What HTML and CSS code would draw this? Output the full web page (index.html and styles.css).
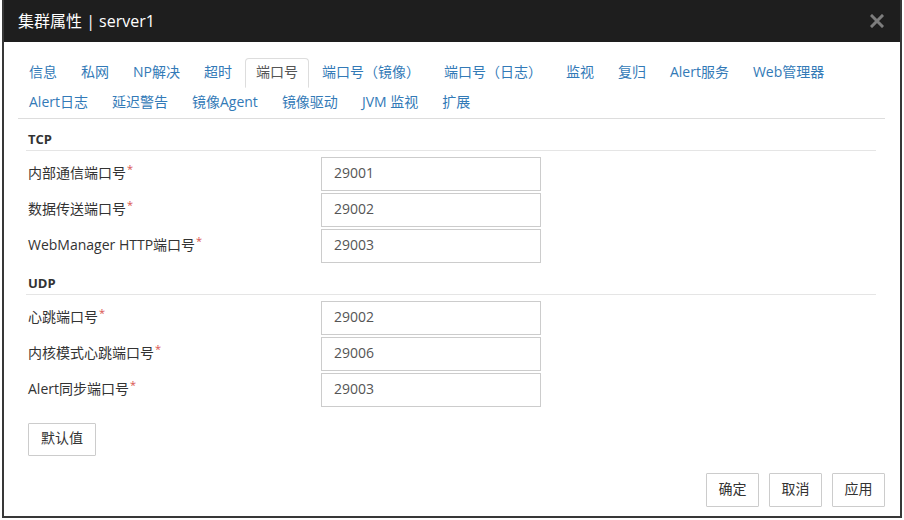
FILE: index.html
```html
<!DOCTYPE html>
<html lang="zh-CN">
<head>
<meta charset="utf-8">
<title>集群属性</title>
<link rel="stylesheet" href="styles.css">
</head>
<body>
<div class="dialog">
  <div class="header">
    <span class="title">集群属性 | server1</span>
    <span class="close" aria-label="close">
      <svg width="14" height="14" viewBox="0 0 14 14"><path d="M2 2 L12 12 M12 2 L2 12" stroke="#7d7d7d" stroke-width="3" stroke-linecap="square"/></svg>
    </span>
  </div>
  <div class="body">
    <ul class="tabs">
      <li><a>信息</a></li>
      <li><a>私网</a></li>
      <li><a>NP解决</a></li>
      <li><a>超时</a></li>
      <li><a class="active">端口号</a></li>
      <li><a>端口号（镜像）</a></li>
      <li><a>端口号（日志）</a></li>
      <li><a>监视</a></li>
      <li><a>复归</a></li>
      <li><a>Alert服务</a></li>
      <li><a>Web管理器</a></li>
      <li><a>Alert日志</a></li>
      <li><a>延迟警告</a></li>
      <li><a>镜像Agent</a></li>
      <li><a>镜像驱动</a></li>
      <li><a>JVM 监视</a></li>
      <li><a>扩展</a></li>
    </ul>
    <div class="form">
      <div class="section">TCP</div>
      <div class="row"><label>内部通信端口号<sup>*</sup></label><input class="field" value="29001"></div>
      <div class="row"><label>数据传送端口号<sup>*</sup></label><input class="field" value="29002"></div>
      <div class="row"><label>WebManager HTTP端口号<sup>*</sup></label><input class="field" value="29003"></div>
      <div class="section">UDP</div>
      <div class="row"><label>心跳端口号<sup>*</sup></label><input class="field" value="29002"></div>
      <div class="row"><label>内核模式心跳端口号<sup>*</sup></label><input class="field" value="29006"></div>
      <div class="row"><label>Alert同步端口号<sup>*</sup></label><input class="field" value="29003"></div>
      <button class="btn default">默认值</button>
    </div>
    <div class="footer">
      <button class="btn">确定</button>
      <button class="btn">取消</button>
      <button class="btn">应用</button>
    </div>
  </div>
</div>
</body>
</html>
```
FILE: styles.css
```css
* { box-sizing: border-box; }
html, body { margin: 0; padding: 0; background: #fff; }
body {
  font-family: "Open Sans", "Noto Sans CJK SC", sans-serif;
  font-size: 14px;
  color: #333;
}
.dialog {
  margin-left: 2px;
  width: 900px;
  height: 518px;
  border: 2px solid #383838;
  border-top: none;
  background: #fff;
}
.header {
  height: 42px;
  background: #1e1e1e;
  display: flex;
  align-items: center;
  justify-content: space-between;
  padding: 0 16px 0 14px;
}
.title {
  color: #fff;
  font-size: 16px;
  line-height: 42px;
}
.close { display: flex; align-items: center; }
.body {
  padding: 16px 15px 0 14px;
}
.tabs {
  list-style: none;
  margin: 0;
  padding: 0;
  display: flex;
  flex-wrap: wrap;
  border-bottom: 1px solid #ddd;
}
.tabs li { display: block; }
.tabs a {
  display: block;
  padding: 3px 10px 5px;
  line-height: 20px;
  margin-right: 2px;
  border: 1px solid transparent;
  border-radius: 4px 4px 0 0;
  color: #337ab7;
  white-space: nowrap;
}
.tabs a.active {
  color: #555;
  border-color: #ddd;
  border-bottom-color: transparent;
  background: #fff;
}
.form {
  margin: 0 9px 0 8px;
}
.section {
  margin-top: 10px;
  margin-bottom: 6px;
  padding-left: 2px;
  font-size: 13px;
  font-weight: bold;
  line-height: 20px;
  padding-bottom: 1px;
  border-bottom: 1px solid #e5e5e5;
  color: #333;
}
.row {
  display: flex;
  align-items: center;
  height: 34px;
  margin-bottom: 2px;
}
.row label {
  width: 295px;
  padding-left: 2px;
  padding-bottom: 3px;
  line-height: 20px;
  color: #333;
}
.row label sup {
  color: #d9534f;
  font-size: 11px;
  vertical-align: 5px;
  line-height: 0;
  margin-left: 1px;
}
.field {
  width: 220px;
  height: 34px;
  border: 1px solid #ccc;
  padding: 0 12px 3px;
  font-family: "Open Sans", "Noto Sans CJK SC", sans-serif;
  font-size: 14px;
  color: #555;
  background: #fff;
  outline: none;
}
.btn {
  font-family: "Open Sans", "Noto Sans CJK SC", sans-serif;
  font-size: 14px;
  color: #333;
  background: #fff;
  border: 1px solid #ccc;
  border-radius: 1px;
  padding: 5px 12px 7px;
  line-height: 20px;
  height: 34px;
}
.btn.default {
  display: block;
  margin-top: 16px;
  margin-left: 2px;
  height: 33px;
  padding: 4px 12px 7px;
}
.footer {
  display: flex;
  justify-content: flex-end;
  gap: 10px;
  margin-top: 17px;
}
.footer .btn { width: 53px; padding-left: 0; padding-right: 0; }
```
